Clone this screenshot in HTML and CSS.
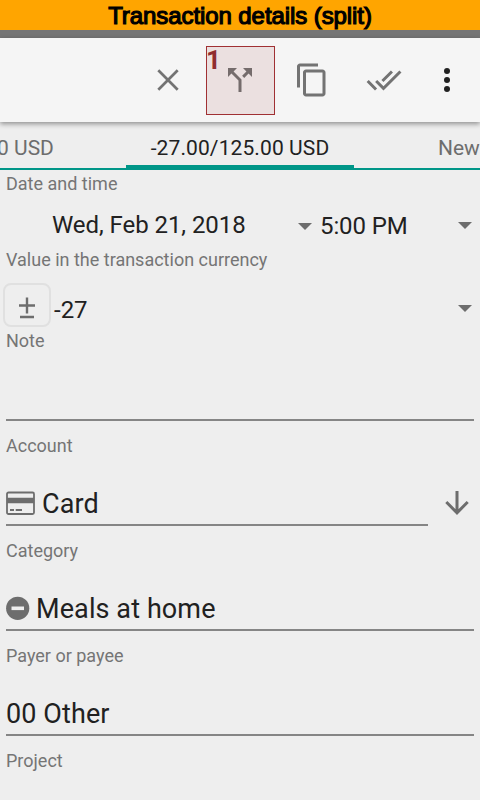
FILE: index.html
```html
<!DOCTYPE html>
<html lang="en">
<head>
<meta charset="utf-8">
<title>Transaction details</title>
<link rel="stylesheet" href="styles.css">
</head>
<body>
<h1 class="caption">Transaction details (split)</h1>
<div class="statusbar"></div>
<header class="toolbar">
  <button class="tool" aria-label="Close"><svg width="36" height="36" viewBox="0 0 36 36"><path d="M8.3 8.3 27.7 27.7M27.7 8.3 8.3 27.7" fill="none" stroke="#737373" stroke-width="2.7"/></svg></button>
  <button class="tool split" aria-label="Split"><span class="mark">1</span><svg width="36" height="36" viewBox="0 0 24 24"><path fill="#756c6c" d="M14 4l2.29 2.29-2.88 2.88 1.42 1.42 2.88-2.88L20 10V4zM10 4H4v6l2.29-2.29 4.71 4.7V20h2v-8.41l-5.29-5.3z"/></svg></button>
  <button class="tool" aria-label="Copy"><svg width="36" height="36" viewBox="0 0 24 24"><path fill="#737373" d="M16 1H4c-1.1 0-2 .9-2 2v14h2V3h12V1zm3 4H8c-1.1 0-2 .9-2 2v14c0 1.100.9 2 2 2h11c1.100 0 2-.9 2-2V7c0-1.100-.9-2-2-2zm0 16H8V7h11v14z"/></svg></button>
  <button class="tool" aria-label="Save all"><svg width="36" height="36" viewBox="0 0 24 24"><path fill="#737373" d="M18 7l-1.410-1.410-6.340 6.340 1.410 1.410L18 7zm4.240-1.410L11.660 16.170 7.480 12l-1.410 1.410L11.660 19l12-12-1.420-1.410zM.410 13.410L6 19l1.410-1.410L1.830 12 .410 13.410z"/></svg></button>
  <button class="tool more" aria-label="More"><svg width="36" height="36" viewBox="0 0 36 36"><g fill="#212121"><circle cx="18" cy="9" r="3"/><circle cx="18" cy="18" r="3"/><circle cx="18" cy="27" r="3"/></g></svg></button>
</header>
<nav class="tabs">
  <span class="tab previous">0 USD</span>
  <span class="tab active">-27.00/125.00 USD</span>
  <span class="tab next">New</span>
</nav>
<main class="form">
  <div class="label">Date and time</div>
  <div class="row datetime">
    <span class="date">Wed, Feb 21, 2018</span><i class="caret low"></i>
    <span class="time">5:00 PM</span><i class="caret end"></i>
  </div>
  <div class="label">Value in the transaction currency</div>
  <div class="row amount">
    <button class="sign" aria-label="Change sign"><svg width="20" height="24" viewBox="0 0 20 24"><path d="M2 10.500H18M10 2.500V18.500M3 22H17" fill="none" stroke="#6d6d6d" stroke-width="2.400"/></svg></button>
    <span class="value">-27</span><i class="caret end"></i>
  </div>
  <div class="label">Note</div>
  <div class="field"></div>
  <div class="label spaced">Account</div>
  <div class="account">
    <div class="field"><svg class="card" width="29" height="24" viewBox="0 0 29 24"><rect x="1" y="1.500" width="27" height="21.500" rx="1.500" fill="none" stroke="#6d6d6d" stroke-width="1.800"/><path fill="#6d6d6d" d="M1 6.800h27v5.400H1zM4 18h4v2H4zM9.700 18H16v2H9.700z"/></svg><span>Card</span></div>
    <svg class="down" width="24" height="26" viewBox="0 0 24 26"><path d="M12 1V23M1.300 12 12 22.800 22.700 12" fill="none" stroke="#6d6d6d" stroke-width="3"/></svg>
  </div>
  <div class="label spaced">Category</div>
  <div class="field category"><svg width="24" height="24" viewBox="0 0 24 24"><circle cx="11.700" cy="12.300" r="11.600" fill="#6d6d6d"/><path d="M5.500 12.300H18" stroke="#eee" stroke-width="3.600"/></svg><span>Meals at home</span></div>
  <div class="label spaced">Payer or payee</div>
  <div class="field"><span>00 Other</span></div>
  <div class="label spaced">Project</div>
</main>
</body>
</html>
```
FILE: styles.css
```css
* { box-sizing: border-box; }
body {
  margin: 0;
  height: 800px;
  overflow: hidden;
  background: #eee;
  color: #212121;
  font-family: Roboto, sans-serif;
}
button { padding: 0; border: 0; background: none; font: inherit; }
svg { display: block; flex: none; }
.caption {
  margin: 0;
  height: 30px;
  background: #ffa500;
  color: #000;
  font: 400 24px/31px "Liberation Sans", sans-serif;
  letter-spacing: -.08px;
  text-align: center;
  -webkit-text-stroke: 1.2px #000;
}
.statusbar { height: 8px; background: #757575; }
.toolbar {
  position: relative;
  display: flex;
  align-items: center;
  justify-content: flex-end;
  height: 84px;
  padding-right: 6px;
  background: #f5f5f5;
  box-shadow: 0 2px 5px rgba(0, 0, 0, .4);
}
.tool { display: flex; align-items: center; justify-content: center; width: 72px; height: 69px; }
.tool.more { width: 54px; }
.split { position: relative; width: 69px; margin: 0 1px 0 2px; padding-right: 1px; border: 1px solid #a03033; background: #ebe0e0; }
.mark {
  position: absolute;
  left: -1px;
  top: 0;
  color: #902d2f;
  font: bold 26px/26px Roboto, sans-serif;
}
.tabs {
  display: flex;
  justify-content: space-between;
  height: 48px;
  border-bottom: 2px solid #009688;
  font-size: 21px;
  line-height: 52px;
  color: #6d6d6d;
  white-space: nowrap;
}
.tab { width: 126px; height: 46px; }
.tab.previous { text-indent: -3px; }
.tab.active { width: 228px; border-bottom: 3px solid #009688; color: #212121; text-align: center; letter-spacing: .1px; }
.tab.next { padding-left: 84px; }
.form { padding: 3px 6px 0; }
.label { height: 21px; font-size: 18px; line-height: 21px; color: #757575; }
.spaced { margin-top: 14px; }
.row { display: flex; align-items: center; font-size: 24px; line-height: 28px; }
.datetime { height: 55px; padding-top: 7px; }
.date { width: 292px; padding-left: 46px; letter-spacing: -.06px; }
.time { margin-left: 8px; padding-top: 2px; letter-spacing: -.1px; }
.caret { border: 7px solid transparent; border-top-color: #6d6d6d; border-bottom: 0; }
.caret.low { margin-top: 3px; }
.caret.end { margin-left: auto; margin-right: 2px; }
.amount { height: 60px; padding-top: 16px; }
.value { padding-top: 4px; }
.sign {
  display: flex;
  align-items: center;
  justify-content: center;
  width: 48px;
  height: 44px;
  margin: -7px 3px 0 -3px;
  padding-top: 5px;
  border: 2px solid #e0e0e0;
  border-radius: 8px;
}
.field {
  display: flex;
  align-items: flex-end;
  gap: 7px;
  height: 70px;
  padding-bottom: 4px;
  border-bottom: 2px solid #858585;
  font-size: 27px;
  line-height: 32px;
  letter-spacing: .1px;
}
.field svg { margin-bottom: 5px; }
.field.category { gap: 6px; }
.account { display: flex; align-items: flex-end; }
.account .field { width: 422px; }
.down { margin: 0 0 10px 17px; }
```
